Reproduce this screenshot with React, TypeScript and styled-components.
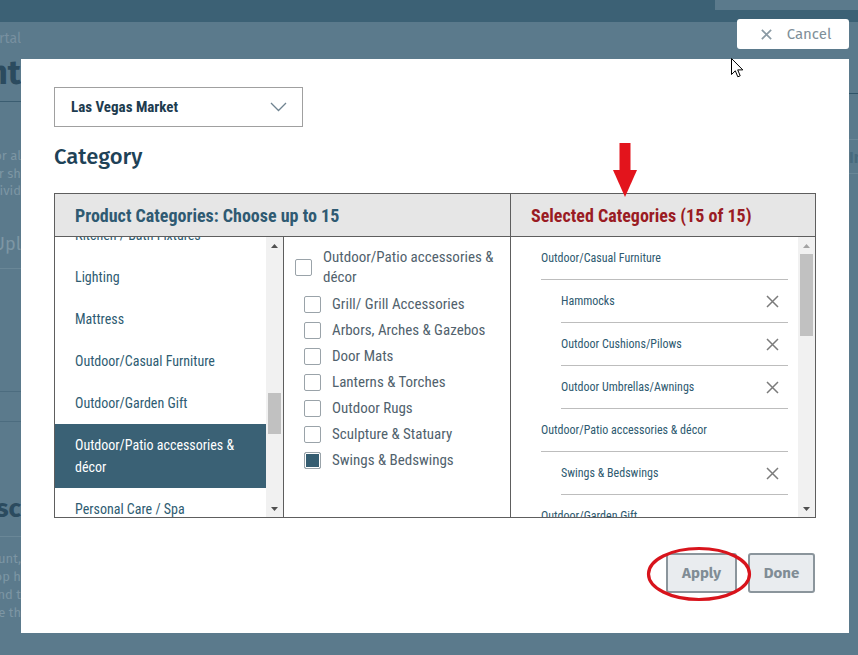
import React, { useLayoutEffect, useRef } from "react";
import styled, { createGlobalStyle } from "styled-components";

const GlobalStyle = createGlobalStyle`
  html, body {
    margin: 0;
    padding: 0;
  }
  body {
    width: 858px;
    height: 655px;
    overflow: hidden;
    background: #5b7a8c;
    font-family: Roboto, "Liberation Sans", sans-serif;
  }
`;

const condensed = `
  font-family: "Roboto Condensed", Roboto, "Liberation Sans", sans-serif;
  font-stretch: 87.5%;
`;

const leftCategories = [
  "Accent Furniture",
  "Area Rugs",
  "Bath Accessories",
  "Bedding",
  "Candles",
  "Casegoods",
  "Children's Furniture",
  "Clocks",
  "Decorative Accessories",
  "Dining Room Furniture",
  "Floor Coverings",
  "Floral & Botanicals",
  "Frames",
  "Garden Décor",
  "Gifts",
  "Holiday & Seasonal",
  "Home Office",
  "Housewares",
  "Infant & Juvenile",
  "Jewelry & Accessories",
  "Kids Gifts",
  "Kitchen Accessories",
  "Kitchen / Bath Fixtures",
  "Lighting",
  "Mattress",
  "Outdoor/Casual Furniture",
  "Outdoor/Garden Gift",
  "Outdoor/Patio accessories & décor",
  "Personal Care / Spa",
  "Pet Products",
  "Pillows & Throws",
  "Rugs",
  "Seasonal Décor",
  "Tabletop",
  "Textiles",
  "Upholstery",
  "Wall Décor",
  "Youth Furniture",
];

const subCategories = [
  { name: "Grill/ Grill Accessories", checked: false },
  { name: "Arbors, Arches & Gazebos", checked: false },
  { name: "Door Mats", checked: false },
  { name: "Lanterns & Torches", checked: false },
  { name: "Outdoor Rugs", checked: false },
  { name: "Sculpture & Statuary", checked: false },
  { name: "Swings & Bedswings", checked: true },
];

const selected = [
  {
    parent: "Outdoor/Casual Furniture",
    items: ["Hammocks", "Outdoor Cushions/Pilows", "Outdoor Umbrellas/Awnings"],
  },
  { parent: "Outdoor/Patio accessories & décor", items: ["Swings & Bedswings"] },
  {
    parent: "Outdoor/Garden Gift",
    items: ["Bird Feeders & Houses", "Garden Accents", "Wind Chimes"],
  },
  { parent: "Lighting", items: ["Lamps", "Chandeliers", "Outdoor Lighting"] },
  { parent: "Mattress", items: ["Mattresses", "Bed Frames", "Mattress Pads"] },
  { parent: "Personal Care / Spa", items: ["Bath & Body", "Spa Gifts"] },
];

const CloseIcon = ({ size = 13, color = "#7b7b7b", width = 1.5 }) => (
  <svg width={size} height={size} viewBox="0 0 13 13">
    <path d="M1 1 L12 12 M12 1 L1 12" stroke={color} strokeWidth={width} fill="none" />
  </svg>
);

function ScrollRail({ thumbTop, thumbSize, atTop }: { thumbTop: number; thumbSize: number; atTop?: boolean }) {
  return (
    <Rail>
      <RailArrow>
        <svg width="7" height="4" viewBox="0 0 7 4">
          <path d="M0 4 L3.5 0 L7 4 Z" fill={atTop ? "#a3a3a3" : "#505050"} />
        </svg>
      </RailArrow>
      <RailTrack>
        <RailThumb style={{ marginTop: thumbTop, height: thumbSize }} />
      </RailTrack>
      <RailArrow>
        <svg width="7" height="4" viewBox="0 0 7 4">
          <path d="M0 0 L3.5 4 L7 0 Z" fill="#505050" />
        </svg>
      </RailArrow>
    </Rail>
  );
}

function App() {
  const leftRef = useRef<HTMLDivElement>(null);
  const kitchenRef = useRef<HTMLDivElement>(null);

  useLayoutEffect(() => {
    // the list is scrolled so that "Kitchen / Bath Fixtures" is half hidden
    const scrollToKitchen = () => {
      if (leftRef.current && kitchenRef.current) {
        leftRef.current.scrollTop = kitchenRef.current.offsetTop + 23;
      }
    };
    scrollToKitchen();
    if (document.fonts) {
      document.fonts.ready.then(scrollToKitchen);
    }
  }, []);

  return (
    <>
      <GlobalStyle />
      <BgPage>
        <TopBar>
          <TopBox />
        </TopBar>
        <BgBody>
          <LeftPeek>
            <PeekLine color="#7890a0" size={14} top={8}>
              Retailer Portal
            </PeekLine>
            <PeekLine color="#2b4b5f" size={34} weight={700} top={3}>
              Content
            </PeekLine>
            <PeekRule color="#3b5d71" top={6} />
            <PeekLine color="#7d96a4" size={13} top={46}>
              Information for al
            </PeekLine>
            <PeekLine color="#7d96a4" size={13} top={1}>
              Please be sure your sh
            </PeekLine>
            <PeekLine color="#7d96a4" size={13} top={0}>
              Each individ
            </PeekLine>
            <PeekLine color="#7d96a4" size={18} top={33}>
              Upl
            </PeekLine>
            <PeekRule color="#6a8797" top={12} />
            <PeekRule color="#4c6c7f" top={122} />
            <PeekRule color="#4c6c7f" top={29} />
            <PeekLine color="#2b4b5f" size={26} weight={700} top={70}>
              Desc
            </PeekLine>
            <PeekRule color="#6a8797" top={10} />
            <PeekLine color="#7d96a4" size={13} top={14}>
              Account,
            </PeekLine>
            <PeekLine color="#7d96a4" size={13} top={1}>
              Shop h
            </PeekLine>
            <PeekLine color="#7d96a4" size={13} top={1}>
              and t
            </PeekLine>
            <PeekLine color="#7d96a4" size={13} top={1}>
              see th
            </PeekLine>
          </LeftPeek>
          <RightPeek>
            <PeekRule color="#2f5468" top={71} />
            <PeekRule color="#6a8797" top={45} />
            <PeekLine color="#486a7d" size={16} weight={700} top={8} align="left">
              In
            </PeekLine>
            <PeekRule color="#6a8797" top={4} />
          </RightPeek>
        </BgBody>
      </BgPage>

      <Overlay>
        <CancelButton>
          <CloseIcon size={11} color="#8a9aa4" width={2} />
          Cancel
        </CancelButton>
        <Modal>
          <Dropdown>
            <span>Las Vegas Market</span>
            <svg width="17" height="10" viewBox="0 0 17 10">
              <polyline points="1,1 8.5,8.5 16,1" fill="none" stroke="#6f8390" strokeWidth="1.3" />
            </svg>
          </Dropdown>
          <Heading>Category</Heading>

          <Table>
            <HeaderRow>
              <HeaderCell>Product Categories: Choose up to 15</HeaderCell>
              <HeaderCell accent>Selected Categories (15 of 15)</HeaderCell>
            </HeaderRow>
            <BodyRow>
              <LeftColumn>
                <ListViewport ref={leftRef}>
                  {leftCategories.map((c) => (
                    <CategoryItem
                      key={c}
                      active={c === "Outdoor/Patio accessories & décor"}
                      ref={c === "Kitchen / Bath Fixtures" ? kitchenRef : undefined}
                    >
                      {c}
                    </CategoryItem>
                  ))}
                </ListViewport>
                <ScrollRail thumbTop={139} thumbSize={41} />
              </LeftColumn>

              <MiddleColumn>
                <ParentOption>
                  <Checkbox />
                  <OptionLabel>Outdoor/Patio accessories &amp; décor</OptionLabel>
                </ParentOption>
                {subCategories.map((s) => (
                  <SubOption key={s.name}>
                    <Checkbox checked={s.checked} />
                    <OptionLabel>{s.name}</OptionLabel>
                  </SubOption>
                ))}
              </MiddleColumn>

              <RightColumn>
                <ListViewport>
                  {selected.map((g) => (
                    <React.Fragment key={g.parent}>
                      <SelectedParent>{g.parent}</SelectedParent>
                      {g.items.map((i) => (
                        <SelectedChild key={i}>
                          <span>{i}</span>
                          <CloseIcon />
                        </SelectedChild>
                      ))}
                    </React.Fragment>
                  ))}
                </ListViewport>
                <ScrollRail thumbTop={0} thumbSize={82} atTop />
              </RightColumn>
            </BodyRow>
          </Table>

          <Actions>
            <ActionButton width={71}>Apply</ActionButton>
            <ActionButton width={67}>Done</ActionButton>
          </Actions>

          <ArrowMark width="24" height="55" viewBox="0 0 24 55">
            <rect x="6.5" y="0" width="11" height="28" fill="#e3141c" />
            <path d="M0 27 L24 27 L12 54 Z" fill="#e3141c" />
          </ArrowMark>
          <RingMark width="106" height="56" viewBox="0 0 106 56">
            <ellipse cx="53" cy="28" rx="50.5" ry="25.5" fill="none" stroke="#d8141c" strokeWidth="3.2" />
          </RingMark>
        </Modal>
        <Pointer width="13" height="21" viewBox="0 0 13 21">
          <path
            d="M0.5 0.5 L0.5 16.5 L4.3 12.8 L6.8 18.8 L9.2 17.8 L6.7 11.9 L11.8 11.9 Z"
            fill="#fff"
            stroke="#000"
            strokeWidth="1"
            strokeLinejoin="round"
          />
        </Pointer>
      </Overlay>
    </>
  );
}

export default App;

const BgPage = styled.div`
  width: 858px;
  height: 655px;
  display: flex;
  flex-direction: column;
  background: #5b7a8c;
`;

const TopBar = styled.div`
  height: 22px;
  background: #3c6175;
  display: flex;
  justify-content: flex-end;
`;

const TopBox = styled.div`
  width: 143px;
  height: 10px;
  background: #5b7a8c;
`;

const BgBody = styled.div`
  flex: 1;
  display: flex;
  justify-content: space-between;
`;

const LeftPeek = styled.div`
  width: 21px;
  display: flex;
  flex-direction: column;
  overflow: hidden;
`;

const RightPeek = styled.div`
  width: 9px;
  display: flex;
  flex-direction: column;
  overflow: hidden;
`;

const PeekLine = styled.div<{ color: string; size: number; weight?: number; top: number; align?: string }>`
  display: flex;
  justify-content: ${(p) => (p.align === "left" ? "flex-start" : "flex-end")};
  white-space: nowrap;
  margin-top: ${(p) => p.top}px;
  font-family: "Fira Sans", Lato, "Open Sans", sans-serif;
  font-size: ${(p) => p.size}px;
  font-weight: ${(p) => p.weight || 400};
  line-height: 1.3;
  color: ${(p) => p.color};
`;

const PeekRule = styled.div<{ color: string; top: number }>`
  flex: none;
  height: 1px;
  margin-top: ${(p) => p.top}px;
  background: ${(p) => p.color};
`;

const Overlay = styled.div`
  position: fixed;
  inset: 0;
  display: flex;
  flex-direction: column;
  padding: 19px 9px 22px 21px;
`;

const CancelButton = styled.button`
  align-self: flex-end;
  width: 112px;
  height: 30px;
  margin-bottom: 10px;
  border: none;
  border-radius: 3px;
  background: #fff;
  display: flex;
  align-items: center;
  justify-content: center;
  gap: 15px;
  padding: 0 0 0 6px;
  font-family: "Fira Sans", Lato, "Open Sans", sans-serif;
  font-size: 15px;
  color: #7f8f99;
`;

const Modal = styled.div`
  position: relative;
  flex: 1;
  background: #fff;
  padding: 28px 34px 0 33px;
  display: flex;
  flex-direction: column;
  align-items: flex-start;
`;

const Dropdown = styled.div`
  width: 249px;
  height: 40px;
  box-sizing: border-box;
  border: 1px solid #a0a0a0;
  display: flex;
  align-items: center;
  justify-content: space-between;
  padding: 0 15px 0 16px;
  ${condensed}
  font-size: 15px;
  font-weight: 700;
  color: #1d3c4f;
`;

const Heading = styled.h2`
  margin: 16px 0 22px;
  font-family: "Fira Sans", Lato, "Open Sans", sans-serif;
  font-size: 22px;
  font-weight: 500;
  line-height: 28px;
  color: #1e4257;
`;

const Table = styled.div`
  width: 762px;
  box-sizing: border-box;
  border: 1px solid #5e5e5e;
  display: flex;
  flex-direction: column;
`;

const HeaderRow = styled.div`
  display: grid;
  grid-template-columns: 455px 305px;
  height: 42px;
  border-bottom: 1px solid #5e5e5e;
  background: #e6e6e6;
`;

const HeaderCell = styled.div<{ accent?: boolean }>`
  display: flex;
  align-items: center;
  padding-left: 20px;
  ${condensed}
  font-size: 18px;
  font-weight: 700;
  color: ${(p) => (p.accent ? "#9a1b23" : "#2f5a72")};
  & + & {
    border-left: 1px solid #5e5e5e;
  }
`;

const BodyRow = styled.div`
  display: grid;
  grid-template-columns: 229px 227px 304px;
  height: 280px;
`;

const LeftColumn = styled.div`
  display: flex;
  border-right: 1px solid #5e5e5e;
  min-height: 0;
`;

const RightColumn = styled.div`
  display: flex;
  min-height: 0;
`;

const ListViewport = styled.div`
  position: relative;
  flex: 1;
  overflow: hidden;
`;

const CategoryItem = styled.div<{ active?: boolean }>`
  padding: 10px 20px;
  line-height: 22px;
  white-space: ${(p) => (p.active ? "normal" : "nowrap")};
  ${condensed}
  font-size: 14px;
  color: ${(p) => (p.active ? "#fff" : "#2e5c72")};
  background: ${(p) => (p.active ? "#3a6175" : "transparent")};
`;

const Rail = styled.div`
  width: 17px;
  flex: none;
  display: flex;
  flex-direction: column;
  background: #f1f1f1;
`;

const RailArrow = styled.div`
  height: 17px;
  display: flex;
  align-items: center;
  justify-content: center;
`;

const RailTrack = styled.div`
  flex: 1;
  display: flex;
  flex-direction: column;
  align-items: center;
`;

const RailThumb = styled.div`
  width: 13px;
  background: #c1c1c1;
`;

const MiddleColumn = styled.div`
  border-right: 1px solid #5e5e5e;
  padding: 10px 0 0 11px;
`;

const ParentOption = styled.div`
  display: flex;
  align-items: center;
  gap: 11px;
  line-height: 20px;
  margin-bottom: 4px;
`;

const SubOption = styled.div`
  display: flex;
  align-items: center;
  gap: 11px;
  height: 26px;
  padding-left: 9px;
`;

const Checkbox = styled.span<{ checked?: boolean }>`
  flex: none;
  width: 17px;
  height: 17px;
  box-sizing: border-box;
  border: 1px solid #9aa3a9;
  border-radius: 2px;
  background: ${(p) => (p.checked ? "#355d71" : "#fff")};
  box-shadow: ${(p) => (p.checked ? "inset 0 0 0 1px #fff" : "none")};
`;

const OptionLabel = styled.span`
  ${condensed}
  font-size: 15px;
  color: #51626d;
  max-width: 180px;
`;

const SelectedParent = styled.div`
  height: 42px;
  margin: 0 10px 0 30px;
  border-bottom: 1px solid #bdbdbd;
  display: flex;
  align-items: center;
  ${condensed}
  font-size: 12px;
  color: #2e5a70;
`;

const SelectedChild = styled(SelectedParent)`
  margin-left: 50px;
  justify-content: space-between;
  padding-right: 9px;
`;

const Actions = styled.div`
  align-self: flex-end;
  display: flex;
  gap: 11px;
  margin-top: 35px;
`;

const ActionButton = styled.button<{ width: number }>`
  width: ${(p) => p.width}px;
  height: 40px;
  box-sizing: border-box;
  border: 2px solid #8b959c;
  border-radius: 3px;
  background: #e9ecef;
  font-family: "Fira Sans", Lato, "Open Sans", sans-serif;
  font-size: 15px;
  font-weight: 700;
  color: #808c95;
  padding: 0;
`;

const ArrowMark = styled.svg`
  position: absolute;
  left: 592px;
  top: 84px;
`;

const RingMark = styled.svg`
  position: absolute;
  left: 625px;
  top: 487px;
`;

const Pointer = styled.svg`
  position: absolute;
  left: 731px;
  top: 58px;
`;
